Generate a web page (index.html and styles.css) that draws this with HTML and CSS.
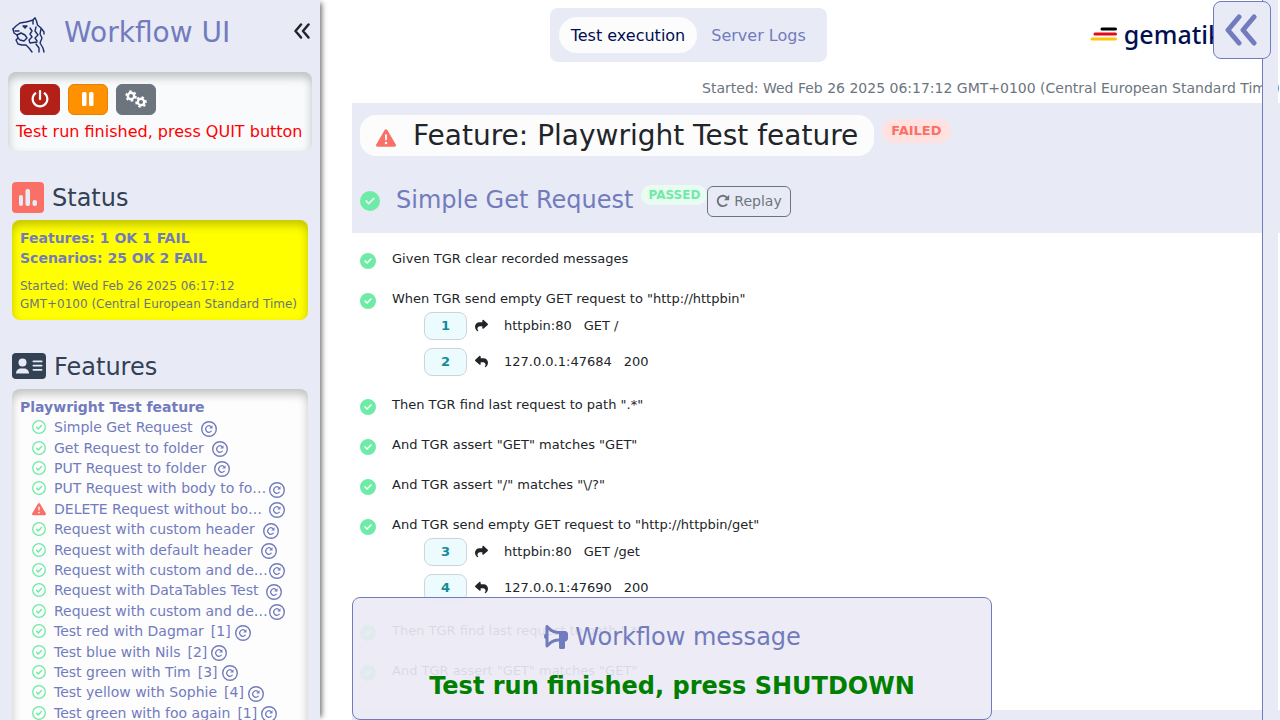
FILE: index.html
```
<!DOCTYPE html>
<html lang="en">
<head>
<meta charset="utf-8">
<title>Workflow UI</title>
<link rel="stylesheet" href="styles.css">
</head>
<body>
<svg class="sprite" aria-hidden="true">
  <symbol id="check" viewBox="0 0 512 512"><path d="M256 512A256 256 0 1 0 256 0a256 256 0 1 0 0 512zM369 209L241 337c-9.400 9.400-24.600 9.400-33.900 0l-64-64c-9.400-9.400-9.400-24.600 0-33.900s24.600-9.400 33.900 0l47 47L335 175c9.400-9.400 24.600-9.400 33.900 0s9.400 24.600 0 33.900z"/></symbol>
  <symbol id="check-line" viewBox="0 0 14 14"><g fill="none" stroke="currentColor" stroke-linecap="round" stroke-linejoin="round"><circle cx="7" cy="7" r="6.300" stroke-width="1.300"/><path d="M4.500 7.200L6.200 8.900L9.500 5.500" stroke-width="1.400"/></g></symbol>
  <symbol id="warn" viewBox="0 0 512 512"><path d="M256 32c14.200 0 27.300 7.500 34.500 19.800l216 368c7.300 12.400 7.300 27.700 .2 40.100S486.300 480 472 480H40c-14.300 0-27.600-7.700-34.700-20.100s-7-27.800 .2-40.100l216-368C228.700 39.500 241.800 32 256 32zm0 128c-13.300 0-24 10.700-24 24V296c0 13.300 10.700 24 24 24s24-10.700 24-24V184c0-13.300-10.700-24-24-24zm32 224a32 32 0 1 0 -64 0 32 32 0 1 0 64 0z"/></symbol>
  <symbol id="share" viewBox="0 0 512 512"><path d="M307 34.800c-11.500 5.100-19 16.600-19 29.200v64H176C78.800 128 0 206.800 0 304C0 417.300 81.500 467.900 100.200 478.100c2.500 1.400 5.300 1.900 8.100 1.900c10.900 0 19.700-8.900 19.700-19.700c0-7.500-4.300-14.400-9.800-19.500C108.800 431.900 96 414.400 96 384c0-53 43-96 96-96h96v64c0 12.600 7.400 24.100 19 29.200s25 3 34.400-5.400l160-144c6.700-6.100 10.600-14.700 10.600-23.800s-3.800-17.700-10.600-23.800l-160-144c-9.400-8.500-22.900-10.600-34.400-5.400z"/></symbol>
  <symbol id="reply" viewBox="0 0 512 512"><use href="#share" width="512" height="512" transform="translate(512 0) scale(-1 1)"/></symbol>
  <symbol id="angles" viewBox="0 0 32 32"><path d="M14 3L3 16L14 29M29 3L18 16L29 29" fill="none" stroke="currentColor" stroke-width="5" stroke-linecap="round" stroke-linejoin="round"/></symbol>
  <symbol id="rotate" viewBox="0 0 14 14"><path d="M10.600 10.600A5.200 5.200 0 1 1 10.900 3.600" fill="none" stroke="currentColor" stroke-width="1.900" stroke-linecap="round"/><path d="M13.200 .7v5.100c0 .3-.2.500-.5.500H7.900z"/></symbol>
  <symbol id="rerun" viewBox="0 0 16 16"><g fill="none" stroke="currentColor"><circle cx="8" cy="8" r="7.300" stroke-width="1.400"/><path d="M10.300 10.200A3.200 3.200 0 1 1 10 5.600" stroke-width="1.200" stroke-linecap="round"/></g><path d="M11.500 4.300V7.600H8.200z"/></symbol>
</svg>
<div class="app">
  <aside class="sidebar">
    <header class="brand">
      <svg class="line tiger" viewBox="0 0 34 36" stroke="#1b2e6b" stroke-width="1.400" stroke-linecap="round" stroke-linejoin="round">
        <path d="M1 12L4 9L8 6L14 5L18 4L21 3L23 .8L24.500 4L25.500 8L29 11L32 15L32 17"/>
        <path d="M1 12L2 16L5 18L9 16L13 18L15 21L12 24L8 23L6 21L4 23L6 27L10 28L14 28L17 31L20 35"/>
        <path d="M3 14L7 14M11 9L15 9L13 11L11 9M5 18L6 21"/>
        <path d="M21 3L21 7M18 11L20 14L18 17L20 20L17 23L18 26L25 25"/>
        <path d="M24 10L23 14L26 18L23 21L25 24M29 12L28 17L30 21L28 26L31 31L32 35M24 27L27 31L27 35"/>
      </svg>
      <h1>Workflow UI</h1>
      <button class="plain" aria-label="Collapse sidebar"><svg width="16" height="16"><use href="#angles"/></svg></button>
    </header>
    <section class="panel controls">
      <div class="buttons">
        <button class="btn quit" aria-label="Quit"><svg width="18" height="18" viewBox="0 0 512 512"><path d="M288 32c0-17.700-14.300-32-32-32s-32 14.300-32 32V256c0 17.700 14.300 32 32 32s32-14.300 32-32V32zM143.500 120.600c13.600-11.300 15.400-31.500 4.100-45.100s-31.500-15.400-45.100-4.100C49.700 115.400 16 181.800 16 256c0 132.500 107.500 240 240 240s240-107.500 240-240c0-74.200-33.800-140.600-86.600-184.600c-13.600-11.300-33.800-9.400-45.100 4.100s-9.400 33.800 4.100 45.100c38.900 32.300 63.500 81 63.500 135.400c0 97.200-78.800 176-176 176s-176-78.800-176-176c0-54.400 24.700-103.100 63.500-135.400z"/></svg></button>
        <button class="btn pause" aria-label="Pause"><svg width="12" height="14" viewBox="0 0 12 14"><rect width="4.500" height="14" rx="1.500"/><rect x="7" width="4.500" height="14" rx="1.500"/></svg></button>
        <button class="btn config" aria-label="Configuration"><svg class="line" width="22" height="18" viewBox="0 0 22 18" stroke="#fff"><circle cx="6" cy="6" r="3.200" stroke-width="2.400"/><circle cx="6" cy="6" r="4.900" stroke-width="1.700" stroke-dasharray="2.600 2.530"/><circle cx="16" cy="12" r="3.200" stroke-width="2.400"/><circle cx="16" cy="12" r="4.900" stroke-width="1.700" stroke-dasharray="2.600 2.530" transform="rotate(30 16 12)"/></svg></button>
      </div>
      <p>Test run finished, press QUIT button</p>
    </section>
    <h2><svg width="32" height="32" viewBox="0 0 32 32"><rect width="32" height="31" rx="4" fill="#fb7066"/><g fill="#e8ebf5"><rect x="7" y="13" width="4" height="11" rx="2"/><rect x="13.500" y="7" width="4.500" height="17" rx="2"/><rect x="20.500" y="18" width="4.500" height="6" rx="2"/></g></svg>Status</h2>
    <section class="panel status">
      <strong>Features: 1 OK 1 FAIL</strong>
      <strong>Scenarios: 25 OK 2 FAIL</strong>
      <p>Started: Wed Feb 26 2025 06:17:12 GMT+0100 (Central European Standard Time)</p>
    </section>
    <h2><svg width="34" height="28" viewBox="0 0 34 28"><rect width="34" height="26" rx="4" fill="#334155"/><g fill="#e8ebf5"><circle cx="10.500" cy="9.500" r="4"/><path d="M4 20.500c0-3.500 2.500-5 5-5h3c2.500 0 5 1.500 5 5z"/><rect x="20.500" y="7.500" width="10" height="1.800" rx=".9"/><rect x="20.500" y="11.700" width="10" height="1.800" rx=".9"/><rect x="20.500" y="15.900" width="10" height="1.800" rx=".9"/></g></svg>Features</h2>
    <section class="panel features">
      <strong>Playwright Test feature</strong>
      <ul>
        <li><svg class="state"><use href="#check-line"/></svg><a href="#s1">Simple Get Request</a><button class="plain" aria-label="Replay"><svg><use href="#rerun"/></svg></button></li>
        <li><svg class="state"><use href="#check-line"/></svg><a href="#s2">Get Request to folder</a><button class="plain" aria-label="Replay"><svg><use href="#rerun"/></svg></button></li>
        <li><svg class="state"><use href="#check-line"/></svg><a href="#s3">PUT Request to folder</a><button class="plain" aria-label="Replay"><svg><use href="#rerun"/></svg></button></li>
        <li class="long"><svg class="state"><use href="#check-line"/></svg><a href="#s4">PUT Request with body to fo…</a><button class="plain" aria-label="Replay"><svg><use href="#rerun"/></svg></button></li>
        <li class="long"><svg class="state failed"><use href="#warn"/></svg><a href="#s5">DELETE Request without bo…</a><button class="plain" aria-label="Replay"><svg><use href="#rerun"/></svg></button></li>
        <li><svg class="state"><use href="#check-line"/></svg><a href="#s6">Request with custom header</a><button class="plain" aria-label="Replay"><svg><use href="#rerun"/></svg></button></li>
        <li><svg class="state"><use href="#check-line"/></svg><a href="#s7">Request with default header</a><button class="plain" aria-label="Replay"><svg><use href="#rerun"/></svg></button></li>
        <li class="long"><svg class="state"><use href="#check-line"/></svg><a href="#s8">Request with custom and de…</a><button class="plain" aria-label="Replay"><svg><use href="#rerun"/></svg></button></li>
        <li><svg class="state"><use href="#check-line"/></svg><a href="#s9">Request with DataTables Test</a><button class="plain" aria-label="Replay"><svg><use href="#rerun"/></svg></button></li>
        <li class="long"><svg class="state"><use href="#check-line"/></svg><a href="#s10">Request with custom and de…</a><button class="plain" aria-label="Replay"><svg><use href="#rerun"/></svg></button></li>
        <li class="variant"><svg class="state"><use href="#check-line"/></svg><a href="#s11">Test red with Dagmar</a><span>[1]</span><button class="plain" aria-label="Replay"><svg><use href="#rerun"/></svg></button></li>
        <li class="variant"><svg class="state"><use href="#check-line"/></svg><a href="#s12">Test blue with Nils</a><span>[2]</span><button class="plain" aria-label="Replay"><svg><use href="#rerun"/></svg></button></li>
        <li class="variant"><svg class="state"><use href="#check-line"/></svg><a href="#s13">Test green with Tim</a><span>[3]</span><button class="plain" aria-label="Replay"><svg><use href="#rerun"/></svg></button></li>
        <li class="variant"><svg class="state"><use href="#check-line"/></svg><a href="#s14">Test yellow with Sophie</a><span>[4]</span><button class="plain" aria-label="Replay"><svg><use href="#rerun"/></svg></button></li>
        <li class="variant"><svg class="state"><use href="#check-line"/></svg><a href="#s15">Test green with foo again</a><span>[1]</span><button class="plain" aria-label="Replay"><svg><use href="#rerun"/></svg></button></li>
      </ul>
    </section>
  </aside>
  <main class="main">
    <header class="top">
      <nav class="tabs">
        <button class="tab active">Test execution</button>
        <button class="tab">Server Logs</button>
      </nav>
      <div class="logo">
        <svg class="line" width="28" height="15" viewBox="0 0 28 15" stroke-width="3" stroke-linecap="round"><path d="M12 2H25.500" stroke="#000"/><path d="M5 7H25.500" stroke="#e20a1b"/><path d="M2 12H25.500" stroke="#fdc60b"/></svg>
        <span>gematik</span>
      </div>
    </header>
    <p class="started">Started: Wed Feb 26 2025 06:17:12 GMT+0100 (Central European Standard Time)</p>
    <section class="band">
      <div class="feature">
        <h3><svg width="20" height="20"><use href="#warn"/></svg>Feature: Playwright Test feature</h3>
        <span class="badge fail">FAILED</span>
      </div>
      <div class="scenario" id="s1">
        <svg width="20" height="20"><use href="#check"/></svg>
        <h4>Simple Get Request</h4>
        <span class="badge pass">PASSED</span>
        <button class="replay"><svg width="14" height="14"><use href="#rotate"/></svg>Replay</button>
      </div>
    </section>
    <ol class="steps">
      <li><svg><use href="#check"/></svg><div><p>Given TGR clear recorded messages</p></div></li>
      <li><svg><use href="#check"/></svg><div><p>When TGR send empty GET request to "http://httpbin"</p>
        <div class="call"><a href="#m1">1</a><svg><use href="#share"/></svg><span>httpbin:80</span><span>GET /</span></div>
        <div class="call"><a href="#m2">2</a><svg><use href="#reply"/></svg><span>127.0.0.1:47684</span><span>200</span></div></div></li>
      <li><svg><use href="#check"/></svg><div><p>Then TGR find last request to path ".*"</p></div></li>
      <li><svg><use href="#check"/></svg><div><p>And TGR assert "GET" matches "GET"</p></div></li>
      <li><svg><use href="#check"/></svg><div><p>And TGR assert "/" matches "\/?"</p></div></li>
      <li><svg><use href="#check"/></svg><div><p>And TGR send empty GET request to "http://httpbin/get"</p>
        <div class="call"><a href="#m3">3</a><svg><use href="#share"/></svg><span>httpbin:80</span><span>GET /get</span></div>
        <div class="call"><a href="#m4">4</a><svg><use href="#reply"/></svg><span>127.0.0.1:47690</span><span>200</span></div></div></li>
      <li><svg><use href="#check"/></svg><div><p>Then TGR find last request to path ".*"</p></div></li>
      <li><svg><use href="#check"/></svg><div><p>And TGR assert "GET" matches "GET"</p></div></li>
    </ol>
    <section class="band next"></section>
  </main>
  <aside class="rail"></aside>
  <button class="expand" aria-label="Open messages"><svg width="34" height="32"><use href="#angles"/></svg></button>
  <section class="message" role="status">
    <h4><svg width="26" height="24" viewBox="0 0 512 512"><path transform="translate(512 0) scale(-1 1)" d="M480 32c0-12.900-7.800-24.600-19.800-29.600s-25.700-2.200-34.900 6.900L381.700 53c-48 48-113.100 75-181 75H192 160 64c-35.300 0-64 28.700-64 64v96c0 35.300 28.700 64 64 64l0 128c0 17.700 14.300 32 32 32h64c17.700 0 32-14.300 32-32V352l8.700 0c67.900 0 133 27 181 75l43.600 43.600c9.200 9.200 22.900 11.900 34.900 6.900s19.800-16.600 19.800-29.600V300.400c18.600-8.800 32-32.500 32-60.400s-13.400-51.600-32-60.400V32zm-64 76.700V240 371.300C357.200 317.800 280.500 288 200.700 288H192V192h8.700c79.800 0 156.500-29.800 215.300-83.300z"/></svg>Workflow message</h4>
    <p>Test run finished, press SHUTDOWN</p>
  </section>
</div>
</body>
</html>
```
FILE: styles.css
```
* { box-sizing: border-box; }
body { margin: 0; font-family: "DejaVu Sans", sans-serif; font-size: 16px; color: #212529; background: #fff; }
h1, h2, h3, h4, p, ul, ol { margin: 0; padding: 0; font-weight: 400; }
ul, ol { list-style: none; }
svg { flex: none; fill: currentColor; }
svg.line { fill: none; }
button { font: inherit; cursor: pointer; }
a { color: inherit; text-decoration: none; }
.sprite { position: absolute; width: 0; height: 0; }
.plain { border: 0; background: none; padding: 0; color: inherit; display: flex; }

.app { position: relative; display: flex; height: 100vh; overflow: hidden; }
.sidebar { flex: none; width: 320px; background: #e8ebf5; box-shadow: 5px 0 5px -3px #777; }
.brand { display: flex; align-items: center; padding: 0 10px 0 12px; height: 64px; }
.tiger { width: 34px; height: 36px; margin-top: 6px; }
.brand h1 { flex: 1; margin-left: 18px; font-size: 28px; color: #727bbd; }
.brand .plain { color: #212529; margin-bottom: 3px; }

.panel { border-radius: 8px; box-shadow: inset 0 5px 10px rgba(0, 0, 0, .24); }
.controls { margin: 8px 8px 0; padding: 12px 8px 9px; background: #f8fafc; color: #f00; white-space: nowrap; }
.buttons { display: flex; gap: 8px; padding-left: 4px; }
.btn { width: 40px; height: 31px; padding: 0 0 2px; border: 1px solid; border-radius: 6px; color: #fff; display: flex; align-items: center; justify-content: center; }
.quit { background: #b32017; border-color: #b32017; }
.pause { background: #ff9100; border-color: #e58200; }
.config { background: #6c757d; border-color: #6c757d; }
.controls p { margin-top: 7px; line-height: 20px; }
.sidebar h2 { display: flex; align-items: center; gap: 8px; height: 44px; margin: 25px 12px 0; font-size: 24px; color: #334155; }
.sidebar strong { display: block; line-height: 20px; }
.status { margin: 0 12px; padding: 8px 8px 7px; background: #ff0; color: #727bbd; font-size: 14px; }
.status p { margin-top: 9px; font-size: 12px; line-height: 18px; color: #6c757d; }
.features { margin: 0 12px; padding: 8px 8px 40px; background: #fdfdfd; color: #727bbd; font-size: 14px; }
.features ul { display: grid; grid-auto-rows: 1fr; min-height: 306px; padding-left: 12px; }
.features li { display: flex; align-items: center; white-space: nowrap; }
.state { width: 14px; height: 14px; margin-right: 8px; color: #6eeba6; }
.state.failed { color: #fb7066; }
.features li .plain { margin: 3px 0 0 8px; }
.features li .plain svg { width: 16px; height: 16px; }
.features .long a { width: 207px; }
.features .variant .plain { margin-left: 4px; }
.features li span { margin-left: 7px; }

.main { flex: none; width: calc(100% - 312px); padding: 8px 0 0 32px; }
.top { display: grid; grid-template-columns: 3fr auto 7fr; align-items: center; }
.tabs { grid-column: 2; display: flex; padding: 9px; background: #e8ebf5; border-radius: 8px; }
.tab { height: 36px; padding: 0 12px; border: 0; border-radius: 18px; background: none; color: #727bbd; }
.tab + .tab { margin-left: 2px; }
.tab.active { background: #fcfcfc; color: #000e52; }
.logo { justify-self: end; display: flex; align-items: center; gap: 6px; margin: 0 66px 2px 0; color: #000e52; font: 500 25px/30px "Noto Sans", sans-serif; }
.started { margin: 16px 8px 0 0; text-align: right; font-size: 14px; line-height: 20px; color: #6c757d; white-space: nowrap; }
.band { margin-top: 5px; padding: 12px 8px 16px; background: #e8ebf5; }
.band.next { margin-top: 0; height: 60px; }
.feature, .scenario { display: flex; align-items: flex-start; }
.feature h3 { display: flex; align-items: center; gap: 17px; height: 41px; padding: 0 16px; border-radius: 16px; background: #fcfcfc; font-size: 28px; }
.feature h3 svg { color: #fb7066; margin-top: 4px; }
.badge { margin-left: 8px; border-radius: 12px; font-weight: 700; }
.fail { margin-top: 4px; padding: 0 9px; font-size: 13px; line-height: 24px; color: #fb7066; background: #ffe2e0; }
.pass { padding: 0 7px; font-size: 12px; line-height: 20px; color: #6eeba6; background: #e9fcf2; }
.scenario { margin-top: 29px; color: #727bbd; }
.scenario > svg { margin: 6px 16px 0 0; color: #6eeba6; }
.scenario h4 { font-size: 24px; line-height: 31px; }
.replay { display: flex; align-items: center; gap: 4px; height: 31px; margin-top: 1px; padding: 0 8px 2px; border: 1px solid #6c757d; border-radius: 6px; background: none; color: #6c757d; font-size: 14px; }

.steps { padding: 5px 8px 20px; font-size: 13px; }
.steps li { display: flex; gap: 16px; min-height: 40px; }
.steps li > svg { width: 16px; height: 16px; margin-top: 15px; color: #6eeba6; }
.steps li > div { padding-top: 11px; }
.steps p { line-height: 20px; }
.call { display: flex; align-items: center; margin: 3px 0 8px 32px; }
.call a { width: 43px; height: 28px; line-height: 26px; text-align: center; border: 1px solid #ced4da; border-radius: 8px; background: #ebfbfe; color: #158a9a; font-weight: 700; }
.call svg { width: 13px; height: 13px; margin: 0 16px 2px 8px; }
.call span { margin-right: 12px; padding-bottom: 2px; }

.rail { position: absolute; top: 0; bottom: 0; right: 2px; width: 16px; background: #e8ebf5; border-left: 1px solid #727bbd; }
.expand { position: absolute; top: 1px; right: 9px; width: 58px; height: 58px; padding: 0 2px 0 0; border: 1px solid #727bbd; border-radius: 8px; background: #e8ebf5; color: #727bbd; display: flex; align-items: center; justify-content: center; }
.message { position: absolute; left: 352px; bottom: 0; width: 50%; height: 123px; padding: 23px 8px; border: 1px solid #727bbd; border-radius: 8px; background: rgba(235, 234, 245, .91); text-align: center; }
.message h4 { display: flex; align-items: center; justify-content: center; gap: 6px; font-size: 24px; line-height: 32px; color: #727bbd; }
.message p { margin-top: 17px; font-size: 24px; line-height: 32px; font-weight: 700; color: #008000; }
```
